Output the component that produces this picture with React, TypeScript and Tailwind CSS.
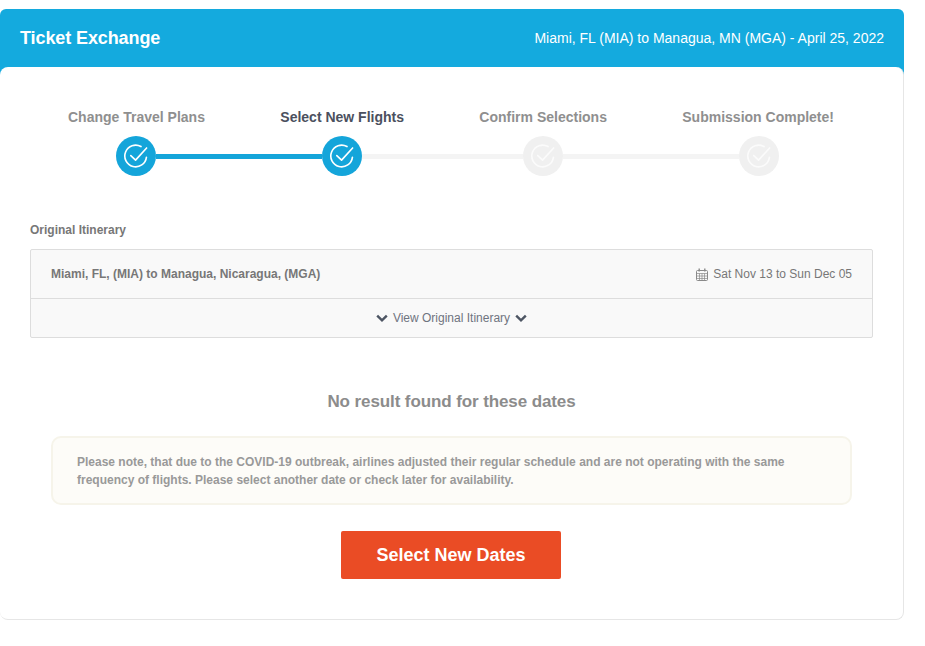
function CheckIcon({ color }: { color: string }) {
  return (
    <svg viewBox="0 0 24 24" className="h-[26px] w-[26px]" fill="none" stroke={color} strokeWidth="1.5" strokeLinecap="round" strokeLinejoin="round">
      <path d="M21.6 13.2A10 10 0 1 1 16.6 3.3" />
      <path d="M7.2 11.6l4.4 4.2L21.8 4.6" />
    </svg>
  )
}

function StepCircle({ active }: { active: boolean }) {
  return (
    <div className={`flex h-10 w-10 shrink-0 items-center justify-center rounded-full ${active ? "bg-[#14a5da]" : "bg-[#f0f0f0]"}`}>
      <CheckIcon color={active ? "#ffffff" : "#fbfbfb"} />
    </div>
  )
}

function Chevron() {
  return (
    <svg viewBox="0 0 12 9" className="h-[9px] w-3" fill="none" stroke="#4d5563" strokeWidth="2.4">
      <path d="M1.2 1.6L6 6.4l4.8-4.8" />
    </svg>
  )
}

function CalendarIcon() {
  return (
    <svg viewBox="0 0 12 13" className="h-[13px] w-3" fill="none" stroke="#8a8a8a" strokeWidth="1">
      <rect x="0.5" y="2.5" width="11" height="10" rx="1" />
      <path d="M0.5 5.5h11M0.5 8h11M0.5 10.5h11M3.5 5.5v7M6 5.5v7M8.5 5.5v7" strokeWidth="0.7" />
      <path d="M3.2 0.5v3M8.8 0.5v3" strokeWidth="1.4" />
    </svg>
  )
}

export default function App() {
  return (
    <div className="min-h-[646px] bg-white pt-[9px] font-['Liberation_Sans',Arial,sans-serif]">
      <div className="w-[904px]">
        <div className="flex h-[66px] justify-between rounded-t-md bg-[#14aade] pl-5 pr-5 pt-[17px] text-white">
          <h1 className="text-lg leading-6 font-bold tracking-[-0.1px]">Ticket Exchange</h1>
          <span className="text-sm leading-6">Miami, FL (MIA) to Managua, MN (MGA) - April 25, 2022</span>
        </div>

        <div className="relative -mt-2 h-[553px] rounded-lg border-r border-b border-[#e6e6e6] bg-white pt-10 pl-[30px] pr-[30px]">
          <div className="ml-[38px] flex w-[766px] justify-between text-sm leading-5 font-bold text-[#8f8f8f]">
            <span>Change Travel Plans</span>
            <span className="text-[#4b505e]">Select New Flights</span>
            <span>Confirm Selections</span>
            <span>Submission Complete!</span>
          </div>

          <div className="mt-[9px] ml-[86px] flex items-center">
            <StepCircle active />
            <div className="h-[5px] w-[166px] bg-[#14a5da]" />
            <StepCircle active />
            <div className="h-[5px] w-[161px] bg-[#f4f4f4]" />
            <StepCircle active={false} />
            <div className="h-[5px] w-[176px] bg-[#f4f4f4]" />
            <StepCircle active={false} />
          </div>

          <div className="mt-[46px] text-xs leading-4 font-bold text-[#777777]">Original Itinerary</div>

          <div className="mt-[11px] w-[843px] rounded-[2px] border border-[#dddddd] bg-[#f9f9f9] text-xs text-[#777777]">
            <div className="flex h-[49px] items-center justify-between border-b border-[#dddddd] pl-5 pr-5">
              <span className="font-bold">Miami, FL, (MIA) to Managua, Nicaragua, (MGA)</span>
              <span className="flex items-center gap-[5px]">
                <CalendarIcon />
                Sat Nov 13 to Sun Dec 05
              </span>
            </div>
            <div className="flex h-[38px] items-center justify-center gap-[5px] text-[#6f7480]">
              <Chevron />
              View Original Itinerary
              <Chevron />
            </div>
          </div>

          <h2 className="mt-[53px] w-[843px] text-center text-[17px] leading-[22px] font-bold tracking-[-0.1px] text-[#8c8c8c]">No result found for these dates</h2>

          <div className="mt-[23px] ml-[21px] h-[69px] w-[801px] rounded-[10px] border-2 border-[#f6f4ea] bg-[#fdfcf8] pt-[15px] pl-6 pr-5 text-xs leading-[18px] font-bold text-[#999999]">
            Please note, that due to the COVID-19 outbreak, airlines adjusted their regular schedule and are not operating with the same frequency of flights. Please select another date or check later for availability.
          </div>

          <div className="mt-[26px] flex w-[842px] justify-center">
            <button className="h-12 w-[220px] rounded-[2px] bg-[#ea4c25] text-lg font-bold text-white">Select New Dates</button>
          </div>
        </div>
      </div>
    </div>
  )
}
